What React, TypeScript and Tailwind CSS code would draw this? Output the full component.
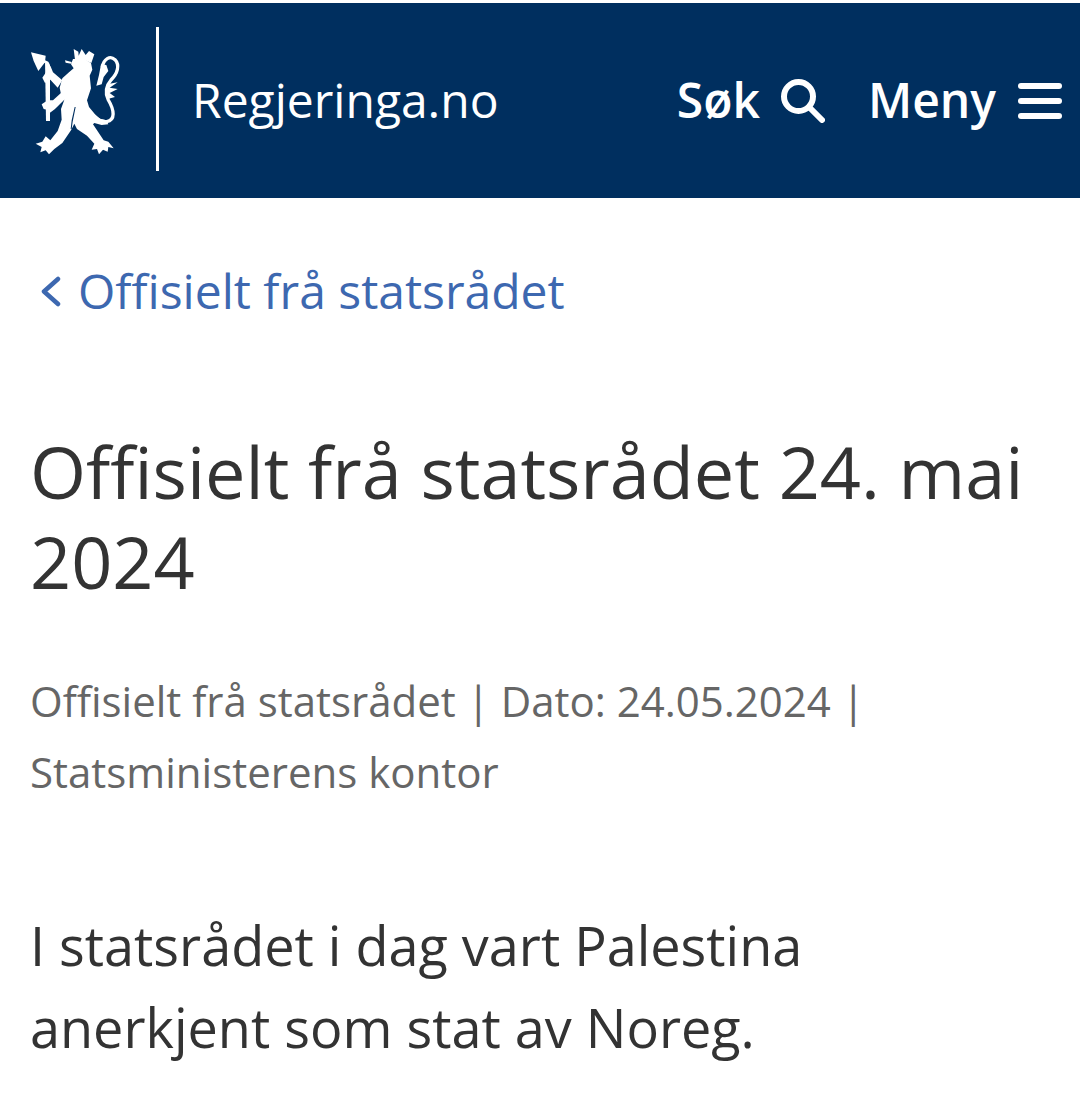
import React from "react";

function Lion() {
  return (
    <svg width="100" height="115" viewBox="0 0 300 345" fill="white" className="shrink-0 mt-[4px]">
      {/* axe */}
      <path d="M18 22 L62 32 L60 52 L40 78 L26 48 Z" />
      <path d="M60 46 L70 50 L75 60 L75 228 L63 228 Z" />
      <path d="M52 98 L76 62 L84 82 L112 106 L98 128 L76 104 L60 114 Z" />
      <path d="M50 178 L68 166 L84 166 L112 140 L124 158 L90 192 L74 204 L66 194 L56 192 Z" />
      {/* crown */}
      <path d="M146 12 L160 20 L161 32 L170 12 L182 30 L192 18 L208 28 L199 54 L176 44 L150 44 Z" />
      {/* tongue */}
      <path d="M120 46 L140 51 L139 56 L122 53 Z" />
      {/* body and legs */}
      <path d="M144 42 L178 42 L198 54 L202 74 L194 92 L198 130 L186 166 L192 186 L210 208 L226 222 L244 226 L250 238 L230 240 L208 234 L204 238 L220 262 L236 286 L250 290 L266 310 L250 306 L248 320 L234 314 L222 328 L216 312 L200 314 L208 296 L186 272 L156 252 L148 236 L138 256 L112 294 L88 312 L72 328 L62 316 L46 322 L50 306 L32 296 L52 290 L62 274 L76 286 L98 258 L110 224 L108 192 L118 164 L108 148 L104 128 L112 100 L132 82 L146 70 L138 58 Z" />
      {/* inner leg line */}
      <path d="M152 186 L143 230 L140 252 L137 252 L140 226 L149 186 Z" fill="#002f5f" />
      {/* tail */}
      <path d="M186 192 C200 215 225 232 245 230 C272 226 268 195 250 165 C238 140 245 120 258 105 C278 85 285 60 270 44 C255 30 236 42 232 66" fill="none" stroke="white" strokeWidth="10" />
      <path d="M228 58 L244 60 L250 78 L236 96 L230 118 L214 122 L222 90 Z" />
      <path d="M246 118 L278 112 L254 128 L278 132 L254 144 L270 156 L248 162 Z" />
    </svg>
  );
}

export default function App() {
  return (
    <div className="w-[1080px] h-[1108px] bg-white overflow-hidden" style={{ fontFamily: '"Open Sans", sans-serif' }}>
      <div className="h-[3px] bg-white" />
      <header className="h-[195px] bg-[#002f5f] flex items-center text-white pl-[25px] pr-[18px]">
        <Lion />
        <div className="w-[3px] h-[144px] bg-white ml-[31px] mr-[33px] mb-[3px]" />
        <span className="text-[48px] leading-none mb-[2px]">Regjeringa.no</span>
        <div className="ml-auto flex items-center">
          <span className="text-[48px] leading-none font-semibold mb-[2px]">Søk</span>
          <svg className="ml-[21px]" width="44" height="44" viewBox="0 0 44 44" fill="none" stroke="white" strokeWidth="6" strokeLinecap="round">
            <circle cx="17.5" cy="17.5" r="14.5" />
            <path d="M29 29 L41 41" />
          </svg>
          <span className="text-[48px] leading-none font-semibold ml-[43px] mb-[2px]">Meny</span>
          <div className="ml-[22px] w-[44px] flex flex-col gap-[9px]">
            <div className="h-[6px] rounded-full bg-white" />
            <div className="h-[6px] rounded-full bg-white" />
            <div className="h-[6px] rounded-full bg-white" />
          </div>
        </div>
      </header>
      <main className="pl-[30px] pr-[30px]">
        <a className="flex items-center text-[#3d68b0] text-[48px] leading-none mt-[69px]">
          <svg width="32" height="32" viewBox="0 0 32 32" fill="none" stroke="#3d68b0" strokeWidth="4.5" strokeLinecap="round" strokeLinejoin="round" className="shrink-0 ml-[3px]">
            <path d="M25 4 L11 16.5 L25 29" />
          </svg>
          <span className="ml-[13px]">Offisielt frå statsrådet</span>
        </a>
        <h1 className="text-[#333333] text-[72px] leading-[90px] mt-[111px] font-normal">Offisielt frå statsrådet 24. mai 2024</h1>
        <p className="text-[#666666] text-[42px] leading-[71px] mt-[59px] w-[900px]">Offisielt frå statsrådet | Dato: 24.05.2024 | Statsministerens kontor</p>
        <p className="text-[#333333] text-[54px] leading-[82px] mt-[97px] w-[900px]">I statsrådet i dag vart Palestina anerkjent som stat av Noreg.</p>
      </main>
    </div>
  );
}
